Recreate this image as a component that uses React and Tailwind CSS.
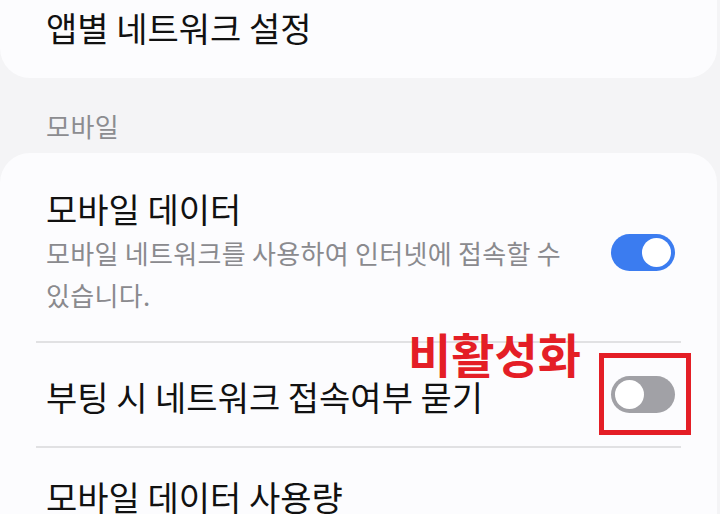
const Toggle = ({ on }) => (
  <div
    className={[
      "flex h-[37px] w-[64px] shrink-0 items-center rounded-full px-[4px]",
      on ? "justify-end bg-[#3b7cf0]" : "justify-start bg-[#a1a1a6]",
    ].join(" ")}
  >
    <div className="h-[29px] w-[29px] rounded-full bg-white" />
  </div>
);

const Divider = () => <div className="mx-[36px] h-[2px] bg-[#e1e1e3]" />;

export default function App() {
  return (
    <div
      className="relative h-[514px] w-[720px] overflow-hidden bg-[#f4f4f6] text-[#111111]"
      style={{ fontFamily: '"Noto Sans CJK KR", "Noto Sans", sans-serif' }}
    >
      <div className="mr-[3px] rounded-b-[30px] bg-[#fcfcfe] pl-[46px] pt-[7px] pb-[29px]">
        <div className="text-[34px] leading-[42px]">앱별 네트워크 설정</div>
      </div>

      <div className="pl-[46px] pt-[33px] pb-[12px] text-[26px] leading-[30px] tracking-[0.5px] text-[#8c8c90]">
        모바일
      </div>

      <div className="mr-[3px] rounded-t-[30px] bg-[#fcfcfe]">
        <div className="flex items-center pl-[46px] pr-[42px] pt-[36px] pb-[25px]">
          <div className="flex-1 pr-[30px]">
            <div className="text-[34px] leading-[40px]">모바일 데이터</div>
            <div className="mt-[3px] text-[26px] leading-[42px] tracking-[0.3px] text-[#8a8a8e]">
              모바일 네트워크를 사용하여 인터넷에 접속할 수 있습니다.
            </div>
          </div>
          <Toggle on />
        </div>
        <Divider />
        <div className="flex h-[103px] items-center pl-[46px] pr-[42px]">
          <div className="flex-1 pt-[4px] text-[34px] leading-[40px]">부팅 시 네트워크 접속여부 묻기</div>
          <Toggle on={false} />
        </div>
        <Divider />
        <div className="pl-[46px] pt-[29px] text-[34px] leading-[40px]">모바일 데이터 사용량</div>
      </div>

      <div className="absolute left-[408px] top-[327px] text-[47px] font-bold leading-[52px] text-[#e41e26]">
        비활성화
      </div>
      <div className="absolute left-[599px] top-[353px] h-[82px] w-[92px] border-[5px] border-[#e41e26]" />
    </div>
  );
}
